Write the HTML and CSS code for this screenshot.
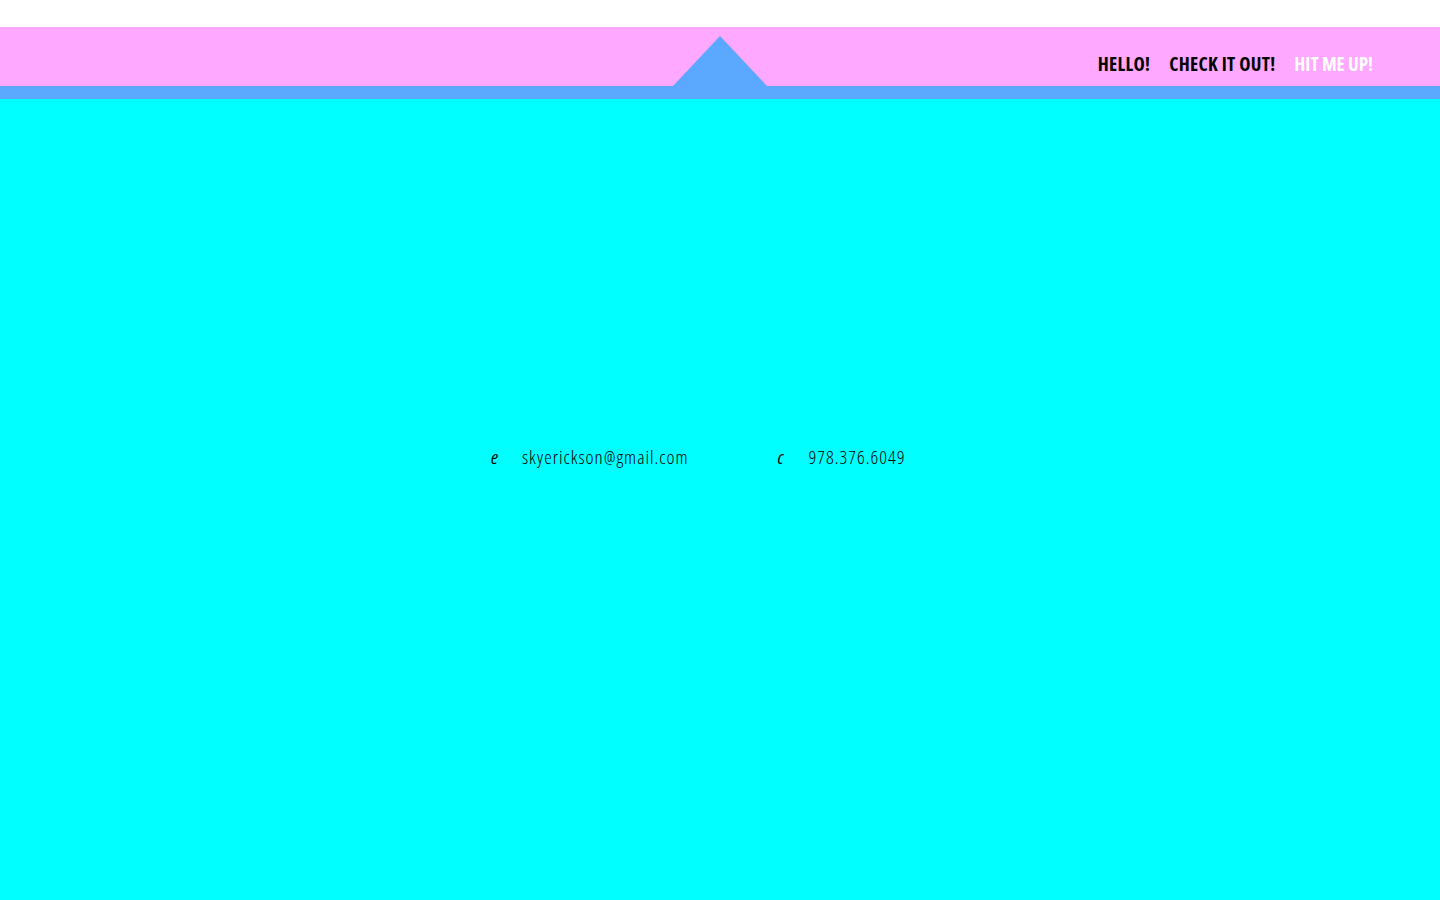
FILE: index.html
```html
<!DOCTYPE html>
<html>
<head>
<meta charset="utf-8">
<title>Sky Erickson</title>
<link rel="stylesheet" href="styles.css">
</head>
<body>
<div class="topgap"></div>
<header class="header">
  <div class="triangle"></div>
  <nav class="nav">
    <a class="nav-link" href="#">HELLO!</a>
    <a class="nav-link" href="#">CHECK IT OUT!</a>
    <a class="nav-link nav-link--active" href="#">HIT ME UP!</a>
  </nav>
</header>
<div class="bar"></div>
<main class="main">
  <div class="contact">
    <div class="contact-item contact-item--email">
      <span class="contact-label">e</span>
      <span class="contact-value">skyerickson@gmail.com</span>
    </div>
    <div class="contact-item">
      <span class="contact-label">c</span>
      <span class="contact-value">978.376.6049</span>
    </div>
  </div>
</main>
</body>
</html>
```

FILE: styles.css
```css
* { box-sizing: border-box; }
html, body { margin: 0; padding: 0; }
body {
  background: #00ffff;
  font-family: "Open Sans", "Noto Sans", sans-serif;
  height: 900px;
  overflow: hidden;
}
.topgap { height: 27px; background: #ffffff; }
.header {
  position: relative;
  height: 59px;
  background: #ffa8ff;
  display: flex;
  justify-content: flex-end;
  align-items: flex-start;
  padding-right: 67px;
}
.triangle {
  position: absolute;
  left: 673px;
  bottom: 0;
  width: 0;
  height: 0;
  border-left: 47px solid transparent;
  border-right: 47px solid transparent;
  border-bottom: 50px solid #5aa8ff;
}
.nav {
  display: flex;
  gap: 19px;
  padding-top: 25px;
}
.nav-link {
  color: #000;
  text-decoration: none;
  font-weight: 700;
  font-stretch: 75%;
  font-size: 19px;
  line-height: 24px;
  letter-spacing: 0.3px;
}
.nav-link--active { color: #fff; letter-spacing: 0; }
.bar { height: 13px; background: #5aa8ff; }
.main {
  display: flex;
  padding-top: 346px;
  padding-left: 491px;
}
.contact { display: flex; gap: 89px; }
.contact-item { display: flex; align-items: baseline; }
.contact-label,
.contact-value {
  font-size: 19px;
  line-height: 24px;
  font-weight: 300;
  font-stretch: 75%;
  letter-spacing: 1px;
  color: #000;
}
.contact-label {
  width: 31px;
  font-style: italic;
  font-weight: 400;
}
```
